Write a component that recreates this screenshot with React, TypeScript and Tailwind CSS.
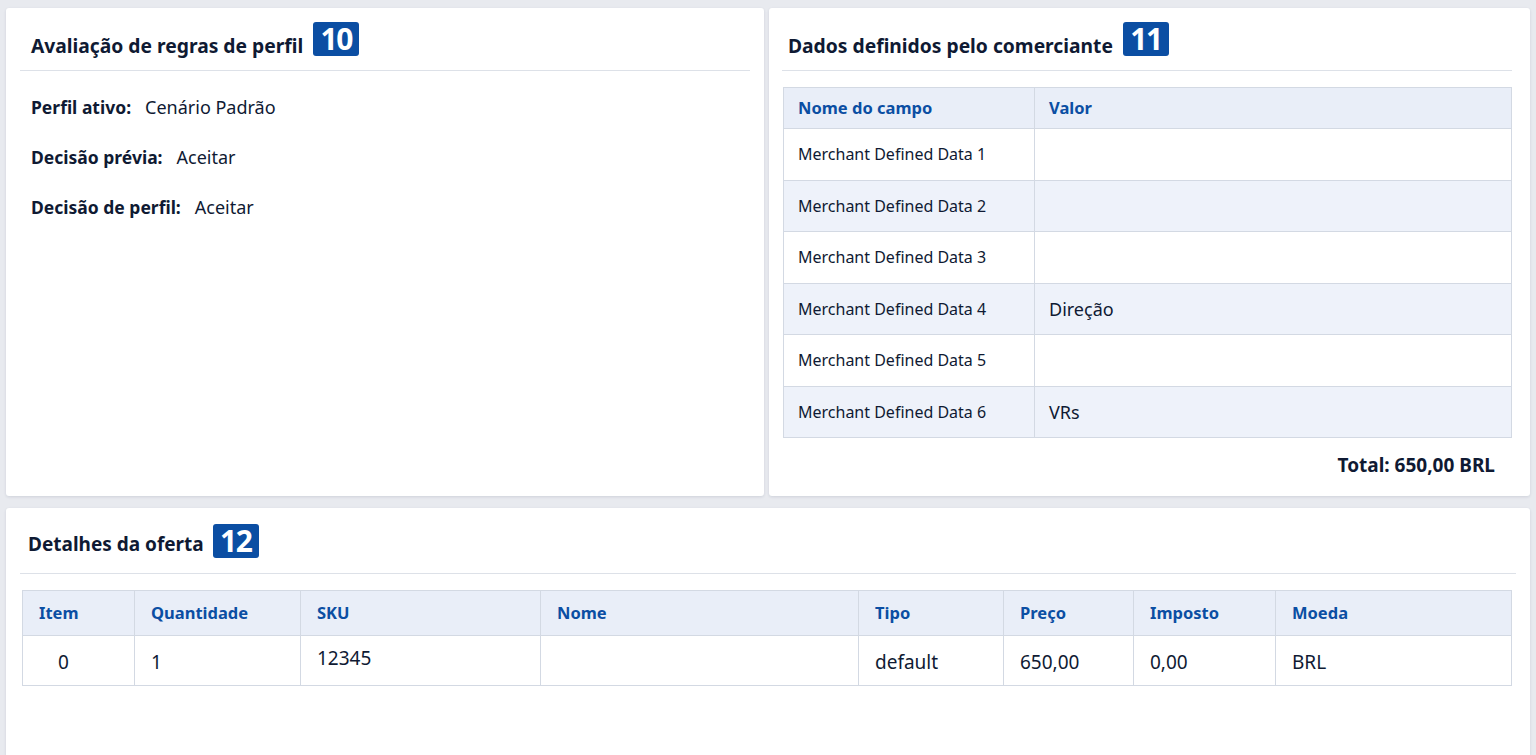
const font = { fontFamily: '"Noto Sans", "Open Sans", sans-serif' }

function Badge({ n }: { n: number }) {
  return (
    <span className="inline-flex h-[34px] w-[46px] items-center justify-center rounded-[3px] bg-[#0b4ea3] text-[30px] font-bold leading-none tracking-[-1.5px] text-white">
      {n}
    </span>
  )
}

function CardHeader({ title, n, inset }: { title: string; n: number; inset: string }) {
  return (
    <div className={`flex items-end gap-[10px] border-b border-[#dde1e8] py-[14px] ${inset}`}>
      <h2 className="pb-[1px] text-[19.25px] font-bold leading-none text-[#0f1a33]">{title}</h2>
      <Badge n={n} />
    </div>
  )
}

const profileRows = [
  ["Perfil ativo:", "Cenário Padrão"],
  ["Decisão prévia:", "Aceitar"],
  ["Decisão de perfil:", "Aceitar"],
]

const merchantRows = [
  ["Merchant Defined Data 1", ""],
  ["Merchant Defined Data 2", ""],
  ["Merchant Defined Data 3", ""],
  ["Merchant Defined Data 4", "Direção"],
  ["Merchant Defined Data 5", ""],
  ["Merchant Defined Data 6", "VRs"],
]

const offerCols = [
  { label: "Item", w: "w-[112px]" },
  { label: "Quantidade", w: "w-[166px]" },
  { label: "SKU", w: "w-[240px]" },
  { label: "Nome", w: "w-[318px]" },
  { label: "Tipo", w: "w-[145px]" },
  { label: "Preço", w: "w-[130px]" },
  { label: "Imposto", w: "w-[142px]" },
  { label: "Moeda", w: "" },
]

const offerValues = ["0", "1", "12345", "", "default", "650,00", "0,00", "BRL"]

export default function App() {
  return (
    <div className="min-h-screen bg-[#e8eaef] px-[6px] pt-[8px] text-[#0f1a33]" style={font}>
      <div className="grid grid-cols-[758px_1fr] gap-[5px]">
        {/* Profile rule evaluation */}
        <section className="h-[488px] rounded-[3px] bg-white px-[14px] shadow-[0_1px_3px_rgba(30,40,70,0.12)]">
          <CardHeader title="Avaliação de regras de perfil" n={10} inset="pl-[11px]" />
          <div className="flex flex-col gap-[24px] pl-[11px] pt-[23px]">
            {profileRows.map(([label, value]) => (
              <div key={label} className="flex h-[26px] items-center gap-[14px] text-[17.5px]">
                <span className="font-bold">{label}</span>
                <span className="text-[18px]">{value}</span>
              </div>
            ))}
          </div>
        </section>

        {/* Merchant defined data */}
        <section className="h-[488px] rounded-[3px] bg-white pl-[13px] pr-[18px] shadow-[0_1px_3px_rgba(30,40,70,0.12)]">
          <CardHeader title="Dados definidos pelo comerciante" n={11} inset="pl-[6px]" />
          <table className="mt-[16px] ml-px w-[729px] border-collapse text-left">
            <thead>
              <tr className="h-[41px] bg-[#e9eef8]">
                <th className="w-[251px] border border-[#d3d9e3] px-[14px] text-[16.5px] font-bold text-[#0b4ea3]">Nome do campo</th>
                <th className="border border-[#d3d9e3] px-[14px] text-[16.5px] font-bold text-[#0b4ea3]">Valor</th>
              </tr>
            </thead>
            <tbody>
              {merchantRows.map(([name, value], i) => (
                <tr key={name} className={`h-[51.5px] ${i % 2 === 1 ? "bg-[#eef2fa]" : "bg-white"}`}>
                  <td className="border border-[#d3d9e3] px-[14px] text-[16px]">{name}</td>
                  <td className="border border-[#d3d9e3] px-[14px] pt-[2px] text-[18px]">{value}</td>
                </tr>
              ))}
            </tbody>
          </table>
          <p className="mt-[15px] pr-[17px] text-right text-[19px] font-bold leading-[24px]">Total: 650,00 BRL</p>
        </section>
      </div>

      {/* Offer details */}
      <section className="mt-[12px] h-[260px] rounded-t-[3px] bg-white px-[14px] shadow-[0_1px_3px_rgba(30,40,70,0.12)]">
        <div className="flex items-end gap-[9px] border-b border-[#dde1e8] pb-[15px] pl-[8px] pt-[16px]">
          <h2 className="pb-[4px] text-[19px] font-bold leading-none text-[#0f1a33]">Detalhes da oferta</h2>
          <Badge n={12} />
        </div>
        <table className="ml-[2px] mt-[16px] w-[1490px] border-collapse text-left">
          <thead>
            <tr className="h-[45px] bg-[#e9eef8]">
              {offerCols.map((c) => (
                <th key={c.label} className={`${c.w} border border-[#d3d9e3] px-[16px] text-[16.5px] font-bold text-[#0b4ea3]`}>
                  {c.label}
                </th>
              ))}
            </tr>
          </thead>
          <tbody>
            <tr className="h-[50px] bg-white">
              {offerValues.map((v, i) => (
                <td
                  key={i}
                  className={`border border-[#d3d9e3] text-[19px] ${i === 0 ? "pl-[35px]" : "px-[16px]"} ${i === 2 ? "pb-[4px]" : "pt-[4px]"}`}
                >
                  {v}
                </td>
              ))}
            </tr>
          </tbody>
        </table>
      </section>
    </div>
  )
}
